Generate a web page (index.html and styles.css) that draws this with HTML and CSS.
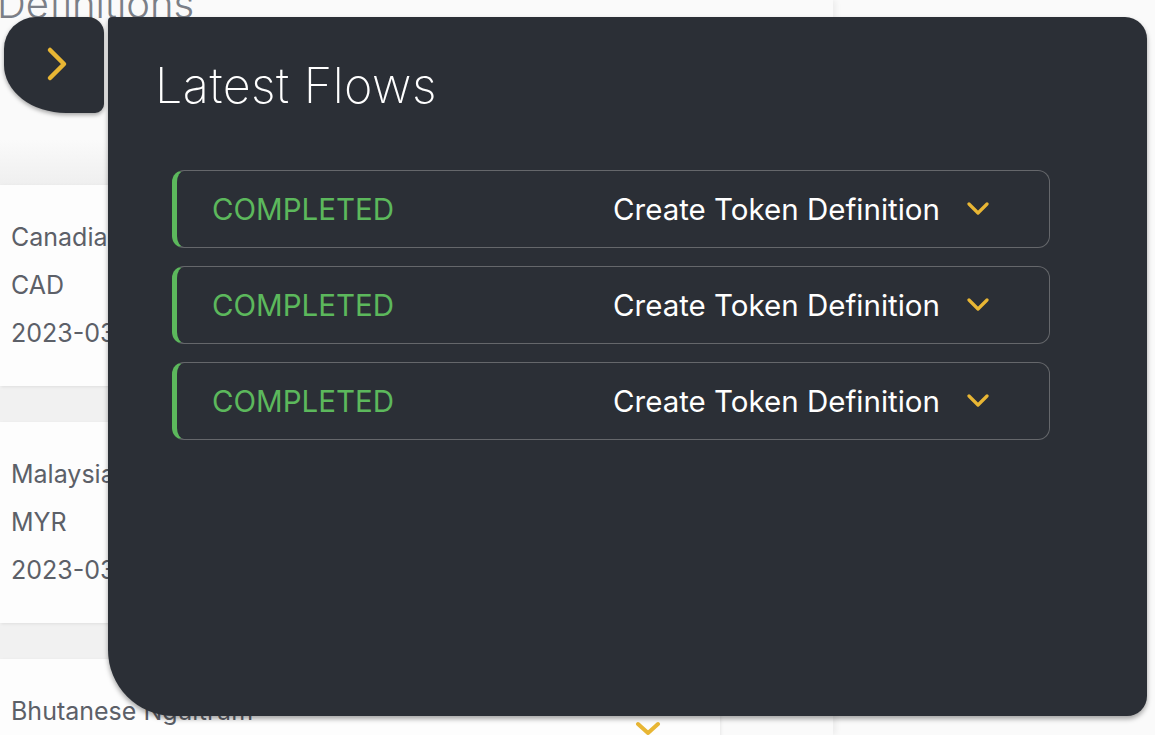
FILE: index.html
```html
<!DOCTYPE html>
<html>
<head>
<meta charset="utf-8">
<link rel="stylesheet" href="styles.css">
</head>
<body>
<div class="page">
  <section class="main">
    <header class="main-head">
      <h1 class="main-title">Definitions</h1>
    </header>
    <div class="card-list">
      <div class="card">
        <div class="card-line">Canadian Dollar</div>
        <div class="card-line">CAD</div>
        <div class="card-line">2023-03-14</div>
      </div>
      <div class="card">
        <div class="card-line">Malaysian Ringgit</div>
        <div class="card-line">MYR</div>
        <div class="card-line">2023-03-14</div>
      </div>
      <div class="card">
        <div class="card-line">Bhutanese Ngultrum</div>
        <svg class="card-chevron" width="26" height="16" viewBox="0 0 26 16"><polyline points="3,3 13,12 23,3" fill="none" stroke="#e8b634" stroke-width="4" stroke-linecap="round" stroke-linejoin="round"/></svg>
      </div>
    </div>
  </section>

  <button class="toggle" type="button">
    <svg width="30" height="40" viewBox="0 0 30 40"><polyline points="9,6 23,20 9,34" fill="none" stroke="#e8b634" stroke-width="4.5" stroke-linecap="round" stroke-linejoin="round"/></svg>
  </button>

  <aside class="panel">
    <h2 class="panel-title">Latest Flows</h2>
    <div class="flows">
      <div class="flow">
        <span class="flow-status">COMPLETED</span>
        <span class="flow-right"><span class="flow-name">Create Token Definition</span>
          <svg class="flow-chev" width="24" height="14" viewBox="0 0 24 14"><polyline points="3,2 12,11 21,2" fill="none" stroke="#e8b634" stroke-width="3.2" stroke-linecap="round" stroke-linejoin="round"/></svg></span>
      </div>
      <div class="flow">
        <span class="flow-status">COMPLETED</span>
        <span class="flow-right"><span class="flow-name">Create Token Definition</span>
          <svg class="flow-chev" width="24" height="14" viewBox="0 0 24 14"><polyline points="3,2 12,11 21,2" fill="none" stroke="#e8b634" stroke-width="3.2" stroke-linecap="round" stroke-linejoin="round"/></svg></span>
      </div>
      <div class="flow">
        <span class="flow-status">COMPLETED</span>
        <span class="flow-right"><span class="flow-name">Create Token Definition</span>
          <svg class="flow-chev" width="24" height="14" viewBox="0 0 24 14"><polyline points="3,2 12,11 21,2" fill="none" stroke="#e8b634" stroke-width="3.2" stroke-linecap="round" stroke-linejoin="round"/></svg></span>
      </div>
    </div>
  </aside>
</div>
</body>
</html>
```
FILE: styles.css
```css
* { box-sizing: border-box; }
html, body { margin: 0; padding: 0; }
body {
  background: #fafafa;
  font-family: Inter, "Noto Sans", sans-serif;
  overflow: hidden;
  width: 1155px;
  height: 735px;
}
.page {
  position: relative;
  width: 1155px;
  height: 735px;
  overflow: hidden;
}
.main {
  width: 833px;
  height: 735px;
  background: #fafafa;
  box-shadow: 3px 0 6px rgba(0,0,0,0.06);
}
.main-head {
  display: flow-root;
  height: 185px;
  background: linear-gradient(to bottom, #fafafa 0, #fafafa 140px, #efefef 185px);
}
.main-title {
  margin: -20px 0 0 -3px;
  font-weight: 300;
  font-size: 40px;
  line-height: 48px;
  color: #7b7f87;
}
.card-list {
  width: 720px;
  background: #f1f1f1;
  display: flex;
  flex-direction: column;
  gap: 36px;
}
.card {
  position: relative;
  height: 201px;
  background: #fdfdfd;
  padding: 28px 0 0 11px;
  box-shadow: 1px 1px 3px rgba(0,0,0,0.08);
}
.card-line {
  font-size: 25px;
  font-weight: 400;
  line-height: 48px;
  color: #5c6068;
  white-space: nowrap;
}
.card-chevron {
  position: absolute;
  left: 635px;
  top: 62px;
}

.toggle {
  position: absolute;
  left: 4px;
  top: 17px;
  width: 100px;
  height: 96px;
  border: none;
  padding: 0 0 2px 4px;
  background: #2b2f36;
  border-radius: 32px 16px 9px 62px / 32px 16px 9px 48px;
  box-shadow: 0 2px 4px rgba(0,0,0,0.35);
  display: flex;
  align-items: center;
  justify-content: center;
}

.panel {
  position: absolute;
  left: 108px;
  top: 17px;
  width: 1039px;
  height: 699px;
  background: #2b2f36;
  border-radius: 4px 22px 20px 66px;
  box-shadow: 0 3px 5px rgba(0,0,0,0.35);
  padding: 52px 0 0 47px;
}
.panel-title {
  margin: 0;
  font-weight: 200;
  font-size: 48.5px;
  line-height: 34px;
  color: #ffffff;
  letter-spacing: 0.5px;
}
.flows {
  margin: 67px 0 0 17px;
  width: 878px;
  display: flex;
  flex-direction: column;
  gap: 18px;
}
.flow {
  height: 78px;
  border: 1.5px solid #65676b;
  border-left: 5px solid #5cb85c;
  border-radius: 12px;
  display: flex;
  align-items: center;
  justify-content: space-between;
  padding: 0 59px 0 35px;
}
.flow-status {
  color: #5cb85c;
  font-size: 29.5px;
  font-weight: 400;
}
.flow-right {
  display: flex;
  align-items: center;
  gap: 26px;
}
.flow-name {
  color: #ffffff;
  font-size: 29.5px;
  font-weight: 400;
}
.flow-chev {
  display: block;
}
```
